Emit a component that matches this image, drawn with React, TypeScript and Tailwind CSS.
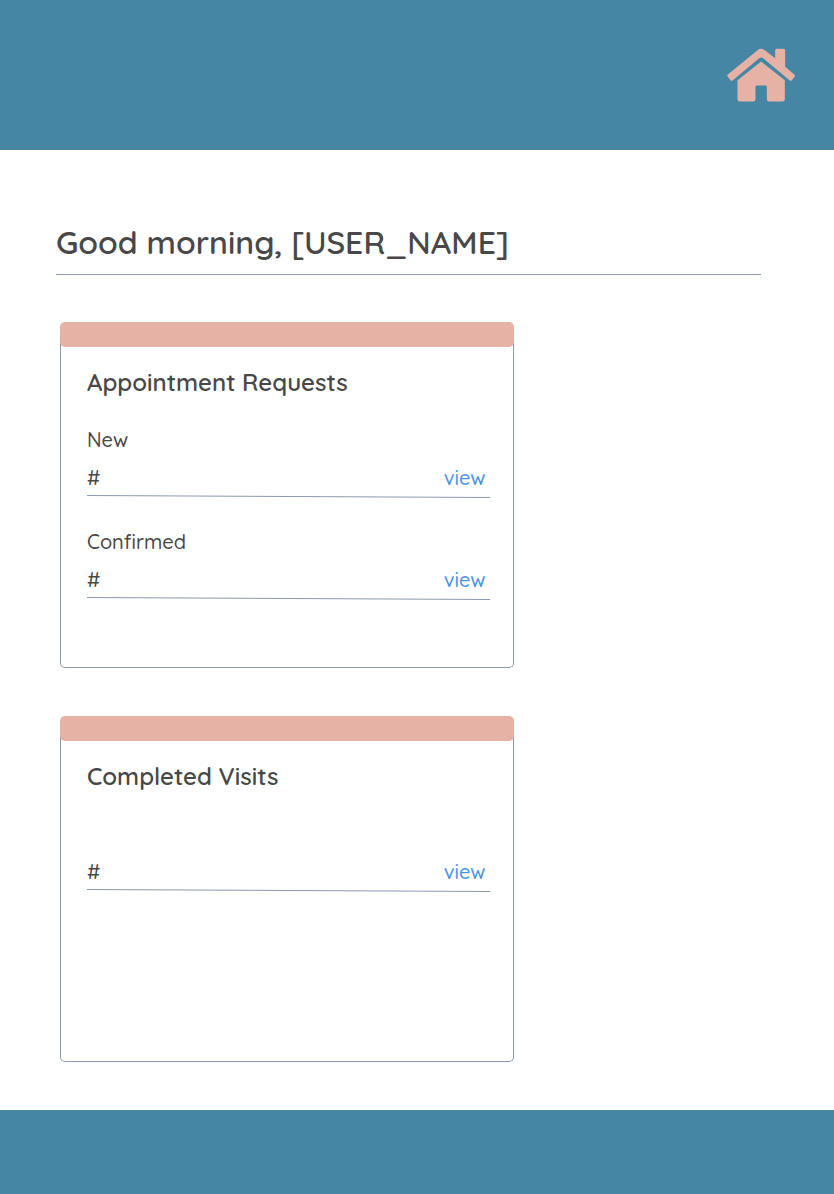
import type { ReactNode } from "react";

function HomeIcon() {
  return (
    <svg className="h-[54px] w-[70px]" viewBox="35.5 38.5 210 162" fill="#e6b2a5" aria-label="Home">
      <path d="M40 119Q38 122 41 125L49 135Q52 138 56 135L135 69Q141 65 147 69L226 135Q230 138 233 135L241 125Q244 122 241 119L213 95V46Q213 41 208 41H188Q183 41 183 46V69L152 45Q141 37 130 45Z" />
      <path d="M70 135L141 79L212 135V192Q212 199 205 199H165Q158 199 158 192V155Q158 151 154 151H128Q124 151 124 155V192Q124 199 117 199H77Q70 199 70 192Z" />
    </svg>
  );
}

function Card({ title, children }: { title: string; children: ReactNode }) {
  return (
    <section className="h-[346px] w-[454px]">
      <div className="relative z-10 h-[25px] rounded-[5px] bg-[#e6b2a5]" />
      <div className="-mt-[5px] h-[326px] rounded-b-[5px] border border-t-0 border-[#8c99a9] pl-[26px] pr-[23px] pt-[25px]">
        <h2 className="h-[31px] text-2xl leading-[30px] font-semibold whitespace-nowrap">{title}</h2>
        {children}
      </div>
    </section>
  );
}

function Row({ label }: { label?: string }) {
  return (
    <div className="h-[102px] pt-[30px] font-medium">
      <div className="h-6 text-xl leading-6">{label}</div>
      <div className="mt-[14px] flex h-6 justify-between pr-[4.5px] text-xl leading-6">
        <span>#</span>
        <a href="#" className="text-[#4a94e6]">view</a>
      </div>
      <svg className="mt-[4px] block h-[4px] w-[403px]" viewBox="0 0 403 4">
        <line x1="0" y1="1.5" x2="403" y2="3.5" stroke="#8c99ae" strokeWidth="1" />
      </svg>
    </div>
  );
}

export default function App() {
  return (
    <div className="flex h-[1194px] w-[834px] flex-col bg-white font-['Quicksand','Lato',sans-serif] text-[#484848]">
      <header className="flex h-[150px] shrink-0 justify-end bg-[#4686a5] pt-12 pr-[38px]">
        <HomeIcon />
      </header>
      <main className="flex-1 pt-[72px]">
        <h1 className="ml-14 h-[53px] w-[705px] border-b border-[#8c99ae] text-[32px] leading-10 font-semibold whitespace-nowrap">
          Good morning, [USER_NAME]
        </h1>
        <div className="mt-[47px] ml-[60px] flex flex-col gap-12">
          <Card title="Appointment Requests">
            <Row label="New" />
            <Row label="Confirmed" />
          </Card>
          <Card title="Completed Visits">
            <Row />
          </Card>
        </div>
      </main>
      <footer className="h-[84px] shrink-0 bg-[#4686a5]" />
    </div>
  );
}
